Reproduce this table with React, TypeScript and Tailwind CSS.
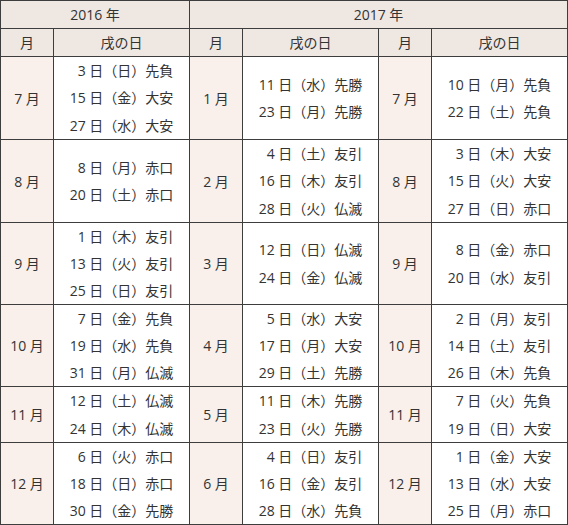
import React from "react";

type Row = {
  m16: string;
  d16: string[];
  m17a: string;
  d17a: string[];
  m17b: string;
  d17b: string[];
};

const rows: Row[] = [
  {
    m16: "7 月",
    d16: ["3 日（日）先負", "15 日（金）大安", "27 日（水）大安"],
    m17a: "1 月",
    d17a: ["11 日（水）先勝", "23 日（月）先勝"],
    m17b: "7 月",
    d17b: ["10 日（月）先負", "22 日（土）先負"],
  },
  {
    m16: "8 月",
    d16: ["8 日（月）赤口", "20 日（土）赤口"],
    m17a: "2 月",
    d17a: ["4 日（土）友引", "16 日（木）友引", "28 日（火）仏滅"],
    m17b: "8 月",
    d17b: ["3 日（木）大安", "15 日（火）大安", "27 日（日）赤口"],
  },
  {
    m16: "9 月",
    d16: ["1 日（木）友引", "13 日（火）友引", "25 日（日）友引"],
    m17a: "3 月",
    d17a: ["12 日（日）仏滅", "24 日（金）仏滅"],
    m17b: "9 月",
    d17b: ["8 日（金）赤口", "20 日（水）友引"],
  },
  {
    m16: "10 月",
    d16: ["7 日（金）先負", "19 日（水）先負", "31 日（月）仏滅"],
    m17a: "4 月",
    d17a: ["5 日（水）大安", "17 日（月）大安", "29 日（土）先勝"],
    m17b: "10 月",
    d17b: ["2 日（月）友引", "14 日（土）友引", "26 日（木）先負"],
  },
  {
    m16: "11 月",
    d16: ["12 日（土）仏滅", "24 日（木）仏滅"],
    m17a: "5 月",
    d17a: ["11 日（木）先勝", "23 日（火）先勝"],
    m17b: "11 月",
    d17b: ["7 日（火）先負", "19 日（日）大安"],
  },
  {
    m16: "12 月",
    d16: ["6 日（火）赤口", "18 日（日）赤口", "30 日（金）先勝"],
    m17a: "6 月",
    d17a: ["4 日（日）友引", "16 日（金）友引", "28 日（水）先負"],
    m17b: "12 月",
    d17b: ["1 日（金）大安", "13 日（水）大安", "25 日（月）赤口"],
  },
];

function HeadCell({ children, span }: { children: React.ReactNode; span?: string }) {
  return (
    <div className={`flex items-center justify-center bg-[#efe7e2] ${span ?? ""}`}>
      {children}
    </div>
  );
}

function MonthCell({ label }: { label: string }) {
  return <div className="flex items-center justify-center bg-[#f9f0eb]">{label}</div>;
}

function DatesCell({ dates }: { dates: string[] }) {
  return (
    <div className="flex items-center justify-center bg-white">
      <div className="flex flex-col items-end leading-[27.3px]">
        {dates.map((d) => (
          <span key={d}>{d}</span>
        ))}
      </div>
    </div>
  );
}

export default function App() {
  return (
    <div
      className="w-[568px] text-[14px] text-[#333333]"
      style={{ fontFamily: '"Open Sans", "Noto Sans CJK JP", sans-serif' }}
    >
      <div className="grid grid-cols-[52px_135px_52px_135px_52px_135px] grid-rows-[27px_27px_82px_82px_81px_81px_55px_81px] gap-px border border-[#3d3d3d] bg-[#3d3d3d]">
        <HeadCell span="col-span-2">2016 年</HeadCell>
        <HeadCell span="col-span-4">2017 年</HeadCell>

        <HeadCell>月</HeadCell>
        <HeadCell>戌の日</HeadCell>
        <HeadCell>月</HeadCell>
        <HeadCell>戌の日</HeadCell>
        <HeadCell>月</HeadCell>
        <HeadCell>戌の日</HeadCell>

        {rows.map((r) => (
          <React.Fragment key={r.m16}>
            <MonthCell label={r.m16} />
            <DatesCell dates={r.d16} />
            <MonthCell label={r.m17a} />
            <DatesCell dates={r.d17a} />
            <MonthCell label={r.m17b} />
            <DatesCell dates={r.d17b} />
          </React.Fragment>
        ))}
      </div>
    </div>
  );
}
